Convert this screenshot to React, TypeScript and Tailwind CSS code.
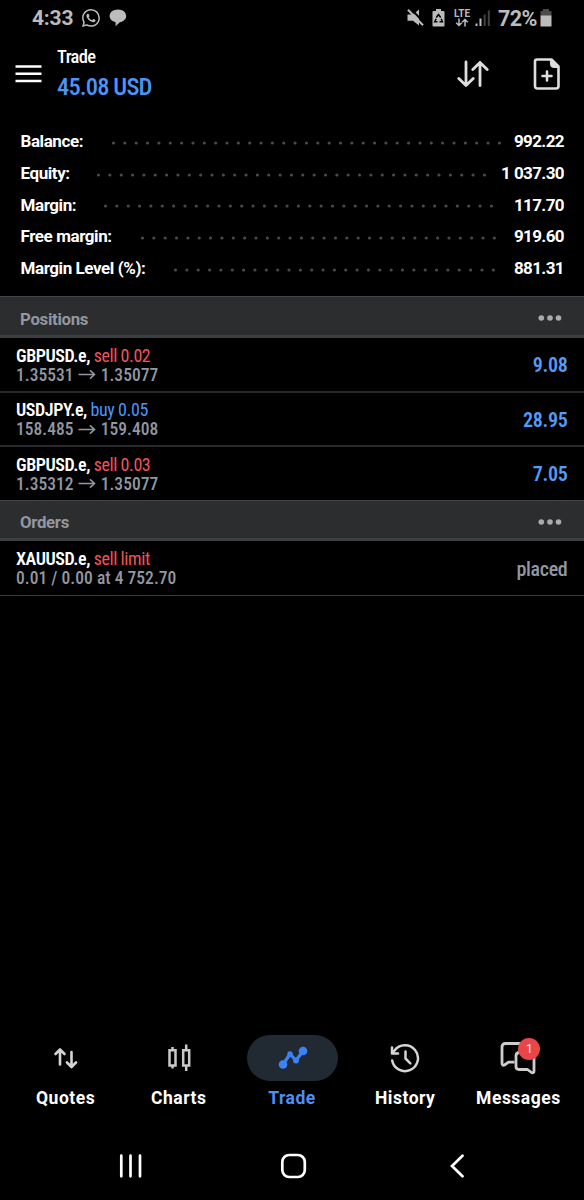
import { BsWhatsapp } from 'react-icons/bs';

type Side = 'sell' | 'buy';

interface SummaryLine {
  label: string;
  value: string;
  labelClass: string;
  dots: number;
}

interface TradeItem {
  symbol: string;
  side: Side;
  action: string;
  from: string;
  to?: string;
  result: string;
  placed?: boolean;
}

const summary: SummaryLine[] = [
  { label: 'Balance:', value: '992.22', labelClass: 'w-[90.5px]', dots: 35 },
  { label: 'Equity:', value: '1 037.30', labelClass: 'w-[75.5px]', dots: 35 },
  { label: 'Margin:', value: '117.70', labelClass: 'w-[82.5px]', dots: 35 },
  { label: 'Free margin:', value: '919.60', labelClass: 'w-[119.5px]', dots: 32 },
  { label: 'Margin Level (%):', value: '881.31', labelClass: 'w-[152.5px]', dots: 29 },
];

const positions: TradeItem[] = [
  { symbol: 'GBPUSD.e,', side: 'sell', action: 'sell 0.02', from: '1.35531', to: '1.35077', result: '9.08' },
  { symbol: 'USDJPY.e,', side: 'buy', action: 'buy 0.05', from: '158.485', to: '159.408', result: '28.95' },
  { symbol: 'GBPUSD.e,', side: 'sell', action: 'sell 0.03', from: '1.35312', to: '1.35077', result: '7.05' },
];

const orders: TradeItem[] = [
  { symbol: 'XAUUSD.e,', side: 'sell', action: 'sell limit', from: '0.01 / 0.00 at 4 752.70', result: 'placed', placed: true },
];

const DOT_STEP = 11.35;

function StatusBar() {
  return (
    <div className="flex h-9 items-center text-[#bcbcbc]">
      <span className="ml-8 w-[50px] text-[21px] leading-[35px] font-bold tracking-[-0.2px]">4:33</span>
      <BsWhatsapp className="h-[18px] w-[18px]" />
      <svg className="ml-[9px]" width="18" height="18" viewBox="0 0 18 18" fill="currentColor">
        <path d="M9 .5C4.300.5.6 3.300.6 7c0 3 2.500 5.400 6 6.200v4l4.200-3.900c3.700-.7 6.400-3.200 6.400-6.300C17.200 3.300 13.700.5 9 .5z" />
      </svg>
      <div className="ml-auto flex items-center">
        <svg width="18" height="18" viewBox="0 0 18 18">
          <path d="M.5 5.500H6L12 .5v16L6 11.800H.5z" fill="currentColor" />
          <path d="M3.500-.5l14 14.500" stroke="#000" strokeWidth="2" />
          <path d="M1 .8l15 15.500" stroke="currentColor" strokeWidth="2" />
        </svg>
        <svg className="ml-[7px]" width="13" height="18" viewBox="0 0 13 18">
          <path d="M4 0h5v2h2.500q1 0 1 1v13.500q0 1-1 1h-10q-1 0-1-1V3q0-1 1-1H4z" fill="currentColor" />
          <path d="M4.300 8.500L6.500 5.500l2.200 3M9.200 9.800l1.200 3H7.500M5.500 12.800H2.700l1.400-3" fill="none" stroke="#000" strokeWidth="1.500" />
        </svg>
        <div className="ml-[8px] flex w-[18px] flex-col items-center">
          <span className="text-[10px] leading-[9px] font-bold">LTE</span>
          <svg width="14" height="9" viewBox="0 0 14 9" fill="none" stroke="currentColor" strokeWidth="1.500">
            <path d="M4 .5v7M1.200 4.700L4 7.500l2.800-2.800M10 8.500v-7M7.200 4.300L10 1.500l2.800 2.800" />
          </svg>
        </div>
        <svg className="ml-[4px]" width="16" height="18" viewBox="0 0 16 18" fill="currentColor">
          <path d="M.5 14.500h2V17h-2zM4.500 9.500h2V17h-2z" />
          <path d="M8.700 5.500h2V17h-2zM12.800 1.500h2V17h-2z" opacity=".35" />
        </svg>
        <span className="ml-[7px] w-[42px] text-[21.500px] leading-[35px] font-bold tracking-[-0.6px]">72%</span>
        <svg width="12" height="18" viewBox="0 0 12 18" fill="currentColor">
          <path d="M3 0h6v2h2.500v5H.5V2H3z" opacity=".4" />
          <path d="M.5 6.500h11V17.500H.5z" />
        </svg>
      </div>
      <span className="w-8" />
    </div>
  );
}

function Header() {
  return (
    <header className="flex h-[76px] pl-[15px]">
      <svg className="mt-[28px]" width="27" height="20" viewBox="0 0 27 20" stroke="#fff" strokeWidth="2.600">
        <path d="M.5 2.500h26M.5 9.800h26M.5 17h26" />
      </svg>
      <div className="ml-[15px] flex flex-col pt-[9px] [font-stretch:75%]">
        <span className="text-[18.5px] leading-6 font-medium tracking-[-0.6px] text-white">Trade</span>
        <span className="mt-[2px] text-[24.5px] leading-8 font-medium tracking-[-0.85px] text-[#4d94f7]">45.08 USD</span>
      </div>
      <div className="ml-auto flex items-start pr-[23px]">
        <svg className="mt-[24px]" width="32" height="28" viewBox="0 0 32 28" fill="none" stroke="#dedede" strokeWidth="2.800" strokeLinecap="round" strokeLinejoin="round">
          <path d="M9 2v23M1.800 18.500L9 25.500l7.200-7M23 25.500V2.500M15.800 9.500L23 2.500l7.200 7" />
        </svg>
        <svg className="ml-[44px] mt-[22px]" width="28" height="32" viewBox="0 0 28 32" fill="none" stroke="#dedede" strokeWidth="2.600" strokeLinejoin="round" strokeLinecap="round">
          <path d="M4 1.500h14.500l7 7V28q0 2.500-2.500 2.500H4.500Q2 30.500 2 28V3.500q0-2 2-2z" />
          <path d="M17.500 1.500l8 8h-5q-3 0-3-3z" fill="#dedede" strokeWidth="1" />
          <path d="M14 13.500v9M9.500 18h9" />
        </svg>
      </div>
    </header>
  );
}

function Summary() {
  return (
    <section className="flex h-[184px] flex-col pt-[14.4px] pr-5 pl-[20.5px]">
      {summary.map((line) => (
        <div key={line.label} className="flex h-[31.65px] items-center text-[17px] font-bold whitespace-nowrap text-white">
          <span className={`shrink-0 tracking-[-0.42px] ${line.labelClass}`}>{line.label}</span>
          <svg className="mt-[2px] h-1 w-[391px] shrink-0" fill="#4a4a4c">
            {Array.from({ length: line.dots }, (_, i) => (
              <circle key={i} cx={2.5 + i * DOT_STEP} cy="2" r="1.6" />
            ))}
          </svg>
          <span className="flex w-0 grow justify-end tracking-[-0.6px]">{line.value}</span>
        </div>
      ))}
    </section>
  );
}

function SectionHeader({ title, className }: { title: string; className: string }) {
  return (
    <div className={`flex items-center justify-between border-t border-b-[3px] border-t-[#434547] border-b-[#3c3f41] bg-[#2c2d2f] pr-[22px] pl-5 ${className}`}>
      <span className="pt-[5px] text-[16.8px] leading-6 font-bold tracking-[-0.3px] text-[#9297a0]">{title}</span>
      <svg className="mt-1" width="24" height="6" viewBox="0 0 24 6" fill="#a9abae">
        <circle cx="3.3" cy="3" r="2.8" />
        <circle cx="12" cy="3" r="2.8" />
        <circle cx="20.500" cy="3" r="2.8" />
      </svg>
    </div>
  );
}

function TradeRow({ item, className }: { item: TradeItem; className: string }) {
  return (
    <div className={`flex items-center justify-between pt-[1.5px] pr-[16.5px] pl-4 [font-stretch:75%] ${className}`}>
      <div className="flex flex-col">
        <div className="text-[18px] leading-5 tracking-[-0.42px]">
          <span className="font-semibold text-white">{item.symbol}</span>{' '}
          <span className={item.side === 'sell' ? 'text-[#f4535c]' : 'text-[#4d94f7]'}>{item.action}</span>
        </div>
        <div className="flex items-center text-[17.5px] leading-[19px] font-medium tracking-[0.04px] text-[#9297a0]">
          <span>{item.from}</span>
          {item.to && (
            <>
              <svg className="mx-[4.500px]" width="18" height="10" viewBox="0 0 18 10" fill="none" stroke="#9297a0" strokeWidth="1.600">
                <path d="M.5 4.500h16M12 .3L16.500 4.500 12 8.700" />
              </svg>
              <span>{item.to}</span>
            </>
          )}
        </div>
      </div>
      <span className={item.placed ? 'text-[20px] font-medium tracking-[-0.3px] text-[#9297a0]' : 'text-[20px] font-semibold tracking-[-0.3px] text-[#559bf5]'}>
        {item.result}
      </span>
    </div>
  );
}

function QuotesIcon() {
  return (
    <svg width="26" height="24" viewBox="0 0 26 24" fill="none" stroke="#d4d4d4" strokeWidth="2.600" strokeLinecap="round" strokeLinejoin="round">
      <path d="M7 18.500V3.500M2.500 8l4.500-4.500L11.500 8M18.500 6v14.500M14 16.500l4.500 4.500 4.500-4.500" />
    </svg>
  );
}

function ChartsIcon() {
  return (
    <svg width="24" height="28" viewBox="0 0 24 28" fill="none" stroke="#c9c9c9" strokeWidth="2.500">
      <path d="M2.500 6.200h6v15.300h-6zM5.500 3v3M5.500 21.500v3M16.200 6.200h6v15.300h-6zM19.200.5V6M19.200 21.500V27" />
    </svg>
  );
}

function TradeIcon() {
  return (
    <svg width="30" height="26" viewBox="0 0 30 26" fill="none" stroke="#3b82f6" strokeWidth="3.200" strokeLinecap="round" strokeLinejoin="round">
      <path d="M5 19.500L12 9l6 6.500L25 6" />
      <g fill="#3b82f6" stroke="none">
        <circle cx="5" cy="19.500" r="4.300" />
        <circle cx="12" cy="9" r="2.700" />
        <circle cx="18" cy="15.500" r="3" />
        <circle cx="25" cy="6" r="4.300" />
      </g>
    </svg>
  );
}

function HistoryIcon() {
  return (
    <svg width="30" height="30" viewBox="0 0 30 30" fill="none" stroke="#d4d4d4" strokeWidth="2.500" strokeLinecap="round" strokeLinejoin="round">
      <path d="M2.200 17.500a13 13 0 1 0 2.300-10L2 10.500M2 4.500v6h6M15.500 8.500v7l4.800 4.800" />
    </svg>
  );
}

function MessagesIcon() {
  return (
    <div className="relative">
      <svg width="36" height="34" viewBox="0 0 36 34" fill="none" stroke="#cfcccc" strokeWidth="2.800" strokeLinejoin="round">
        <path d="M14.500 21.200H8.500L4.500 24Q2 25 2 22V6Q2 2.500 5.500 2.500h13.500q3 0 3 3v6.500" />
        <path d="M19.500 11.500q-3.500 0-3.500 3.500v10.500q0 3 3 3h8.500l4 3q2.500 1 2.500-1.500V14" />
      </svg>
      <span className="absolute top-[-3px] left-[18px] flex h-[22px] w-[22px] items-center justify-center rounded-full bg-[#ea4548] text-[12px] text-white">
        1
      </span>
    </div>
  );
}

const tabs = [
  { label: 'Quotes', icon: <QuotesIcon /> },
  { label: 'Charts', icon: <ChartsIcon /> },
  { label: 'Trade', icon: <TradeIcon />, active: true },
  { label: 'History', icon: <HistoryIcon /> },
  { label: 'Messages', icon: <MessagesIcon /> },
];

function TabBar() {
  return (
    <nav className="mt-auto grid h-[87px] grid-cols-5 px-[9px]">
      {tabs.map((tab) => (
        <div key={tab.label} className="flex flex-col items-center">
          <div className={`flex h-[46px] w-[91px] items-center justify-center rounded-full ${tab.active ? 'ml-[2px] bg-[#212933]' : ''}`}>
            {tab.icon}
          </div>
          <span className={`mt-[5px] text-[17.500px] leading-6 font-bold tracking-[0.5px] ${tab.active ? 'text-[#4d8ff5]' : 'text-white'}`}>
            {tab.label}
          </span>
        </div>
      ))}
    </nav>
  );
}

function SystemNav() {
  return (
    <div className="flex h-[78px] items-center pt-[10px] pl-[118px]">
      <svg width="24" height="24" viewBox="0 0 24 24" stroke="#fff" strokeWidth="2.700" strokeLinecap="round">
        <path d="M3.300 1.700v20.600M12.500 1.700v20.600M22 1.700v20.600" />
      </svg>
      <svg className="ml-[138px]" width="27" height="26" viewBox="0 0 27 26" fill="none" stroke="#fff" strokeWidth="2.700">
        <rect x="2.300" y="2" width="22.500" height="22" rx="7" />
      </svg>
      <svg className="ml-[142px]" width="16" height="24" viewBox="0 0 16 24" fill="none" stroke="#fff" strokeWidth="2.700" strokeLinecap="round">
        <path d="M13.500 1.800L3 12l10.500 10.200" />
      </svg>
    </div>
  );
}

export default function App() {
  return (
    <div className="flex h-[1200px] w-[584px] flex-col overflow-hidden bg-black font-['Roboto',sans-serif]">
      <StatusBar />
      <Header />
      <Summary />
      <SectionHeader title="Positions" className="h-[42px]" />
      {positions.map((item, i) => (
        <TradeRow
          key={i}
          item={item}
          className={i < positions.length - 1 ? 'h-[54.500px] border-b-2 border-[#28292d]' : 'h-[53px]'}
        />
      ))}
      <SectionHeader title="Orders" className="h-[41px]" />
      {orders.map((item, i) => (
        <TradeRow key={i} item={item} className="h-[55px] border-b border-[#3a3b3e]" />
      ))}
      <TabBar />
      <SystemNav />
    </div>
  );
}
